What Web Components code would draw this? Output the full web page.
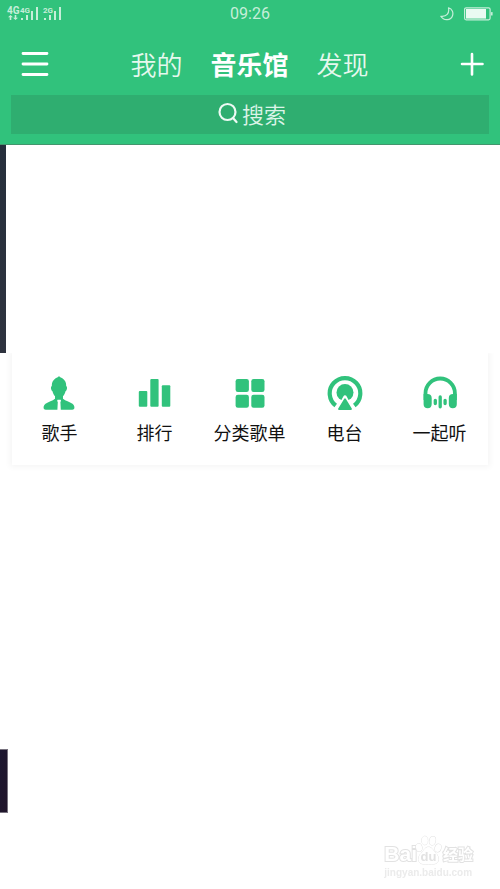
<!DOCTYPE html>
<html lang="zh-CN">
<head>
<meta charset="utf-8">
<meta name="viewport" content="width=device-width, initial-scale=1">
<title>音乐馆</title>
<style>
html, body { margin: 0; background: #fff; }
body { font-family: "Noto Sans CJK SC", "Noto Sans", sans-serif; }
</style>
</head>
<body>
<music-app></music-app>

<template id="status-bar">
<style>
:host { display: grid; grid-template-columns: 1fr auto 1fr; align-items: center; height: 28px; padding: 0 7px; color: #c6eed9; }
svg { display: block; fill: currentColor; }
time { font: 16px/24px Roboto, sans-serif; }
.left, .right { display: flex; align-items: center; gap: 10px; }
.left { gap: 4px; }
.right { justify-content: flex-end; }
.sims { display: flex; gap: 4px; }
.cell { display: flex; }
.sim { display: grid; }
.sim svg, .sim span { grid-area: 1 / 1; }
.sim span { font: bold 8px/8px Roboto, sans-serif; }
.sim svg { justify-self: end; }
.net { font: bold 10px/8px Roboto, sans-serif; }
</style>
<div class="left">
  <div class="cell"><div class="net"><span>4G</span><svg width="13" height="6" viewBox="0 0 13 6"><path d="M3.500 0 1 2.300h1.700V5h1.600V2.300H6zM8.500 5 6 2.700h1.700V0h1.600v2.700H11z"/></svg></div>
  <div class="sim"><span>4G</span><svg width="19" height="14" viewBox="0 0 19 14"><path d="M1 11h2v2H1zM6 8h2v5H6zM11 4h2v9h-2zM16 0h2v13h-2z"/></svg></div></div>
  <div class="sim"><span>2G</span><svg width="19" height="14" viewBox="0 0 19 14"><path d="M1 11h2v2H1zM6 8h2v5H6zM11 4h2v9h-2zM16 0h2v13h-2z"/></svg></div>
</div>
<time>09:26</time>
<div class="right">
  <svg width="14" height="14" viewBox="0 0 14 14"><path d="M8.500.8C12.200 2 13.600 5.500 12.500 8.700 11 13.300 4 14.400.8 9.300 6.500 10 9.600 6.500 8.500.8Z" fill="none" stroke="currentColor" stroke-width="1.200" stroke-linejoin="round"/></svg>
  <svg width="29" height="14" viewBox="0 0 29 14"><rect x=".6" y=".8" width="25.500" height="12" rx="1.500" fill="none" stroke="currentColor" stroke-width="1.200"/><path fill="#eafaf2" d="M2 2h20v9.600H2z"/><rect x="27" y="5" width="1.600" height="3.600" rx=".6"/></svg>
</div>
</template>

<template id="nav-bar">
<style>
:host { display: grid; grid-template-columns: 1fr auto 1fr; align-items: center; height: 72px; padding: 0 14px 0 20px; }
button { all: unset; box-sizing: border-box; cursor: pointer; display: block; }
svg { display: block; fill: none; stroke: #fff; }
.add { justify-self: end; }
nav { display: flex; gap: 28px; padding-right: 7px; }
nav button { font-size: 26px; line-height: 36px; font-weight: 350; color: #e6f8ee; }
nav button[aria-current] { font-weight: 700; color: #fff; }
</style>
<button aria-label="菜单"><svg width="30" height="28" viewBox="0 0 30 28"><path d="M3 3.500h24M3 14h24M3 24.500h24" stroke-width="2.800" stroke-linecap="round"/></svg></button>
<nav><button>我的</button><button aria-current="page">音乐馆</button><button>发现</button></nav>
<button class="add" aria-label="添加"><svg width="28" height="28" viewBox="0 0 28 28"><path d="M4 14h20.500M14 4v20.500" stroke-width="2.600" stroke-linecap="round"/></svg></button>
</template>

<template id="search-bar">
<style>
:host { display: block; margin: -5px 11px 0; }
button { all: unset; cursor: pointer; box-sizing: border-box; width: 100%; height: 39px; display: flex; align-items: center; justify-content: center; gap: 4px; padding: 0 0 4px 4px; background: #2fae70; color: #dcf4e8; font-size: 22px; line-height: 32px; font-weight: 350; }
svg { display: block; }
</style>
<button><svg width="20" height="22" viewBox="0 0 20 22"><g fill="none" stroke="#eefaf4" stroke-width="2.200" stroke-linecap="round"><circle cx="9.500" cy="10" r="8"/><path d="m15 16 3.500 4"/></g></svg><span><slot></slot></span></button>
</template>

<template id="menu-item">
<style>
:host { display: block; flex: 1 1 0; }
a { display: flex; flex-direction: column; align-items: center; gap: 8px; color: #111; text-decoration: none; font-size: 18px; line-height: 26px; white-space: nowrap; }
::slotted(svg) { display: block; width: 36px; height: 36px; fill: #31c27c; }
</style>
<a href="#"><slot name="icon"></slot><span><slot></slot></span></a>
</template>

<template id="baidu-mark">
<style>
:host { position: fixed; right: 27px; bottom: 10px; color: #fff; -webkit-text-stroke: 2px #e2e2e2; paint-order: stroke fill; }
.row { display: flex; align-items: flex-end; height: 32px; }
.bai { font: bold 21px/24px "Liberation Sans", sans-serif; }
.paw { display: grid; place-items: end center; margin-left: -2px; }
.paw svg, .paw span { grid-area: 1 / 1; }
svg { display: block; fill: #fff; stroke: #e2e2e2; }
.paw span { font: bold 13px/18px "Liberation Sans", sans-serif; color: #e2e2e2; -webkit-text-stroke: 0; }
.cn { font-size: 15px; line-height: 24px; font-weight: 700; margin-left: 1px; }
.url { font: bold 10px/13px "Liberation Sans", sans-serif; color: #ebebeb; -webkit-text-stroke: 0; }
</style>
<div class="row"><span class="bai">Bai</span><div class="paw"><svg width="27" height="31" viewBox="0 0 27 31"><path d="M13.500 12c4 0 4.500 4 7.500 6.500 3.500 3 3.800 10-2 10.500-3 .3-8 .3-11 0-5.800-.5-5.500-7.500-2-10.500C9 16 9.500 12 13.500 12Z"/><ellipse cx="4" cy="12.500" rx="3" ry="4" transform="rotate(-15 4 12.500)"/><ellipse cx="9.800" cy="5.500" rx="3" ry="4.300"/><ellipse cx="17.500" cy="5.800" rx="3" ry="4.300" transform="rotate(12 17.500 5.800)"/><ellipse cx="23" cy="13" rx="3" ry="4" transform="rotate(20 23 13)"/></svg><span>du</span></div><span class="cn">经验</span></div>
<div class="url">jingyan.baidu.com</div>
</template>

<template id="music-app">
<style>
:host { display: flex; flex-direction: column; min-height: 100vh; }
header { background: #31c27c; padding-bottom: 10px; border-bottom: 1px solid #43956d; }
.banner { position: relative; z-index: 1; height: 208px; background: linear-gradient(#262f3c, #2e333f) left / 6px 100% no-repeat #fff; }
.card { display: flex; margin: 0 12px; padding: 22px 1px 20px 0; background: #fff; box-shadow: 0 0 6px 2px #f5f5f5; }
.next { width: 7px; height: 62px; margin: auto 0 76px; background: linear-gradient(100deg, #1c1730, #21152a); border: 1px solid #77727e; border-left: 0; }
</style>
<header><status-bar></status-bar><nav-bar></nav-bar><search-bar>搜索</search-bar></header>
<div class="banner"></div>
<div class="card">
  <menu-item>歌手<svg slot="icon" viewBox="0 0 36 36"><path d="M17 1c1 1.500 2.600 1.700 4 2.800 2.200 1.700 3.300 4.200 3.200 7.200.8.500 1 1.800.7 3-.3 1-.8 2-1.400 2.300-.5 2-1.300 3.700-2.500 5v2.500c2.500 2.300 6.500 3 9.500 5 1.500 1 2 2.800 1.900 4.200-.2 1.200-.9 1.700-2.100 1.700H18.800L18.400 27c.6-.5.7-1.500.3-2.200h-3.200c-.4.700-.3 1.700.3 2.200l-.4 7.700H3.700c-1.200 0-1.900-.5-2.100-1.700-.1-1.400.4-3.200 1.900-4.200 3-2 7-2.700 9.500-5v-2.500c-1.200-1.300-2-3-2.500-5-.6-.3-1.100-1.300-1.400-2.300-.3-1.200-.1-2.500.7-3-.1-3 1-5.500 3.200-7.200 1.400-1.100 3-1.300 4-2.800Z"/></svg></menu-item>
  <menu-item>排行<svg slot="icon" viewBox="0 0 36 36"><rect x="1.800" y="16" width="8.500" height="15.800" rx="1"/><rect x="13.300" y="4" width="8.300" height="27.800" rx="1"/><rect x="24.800" y="10.300" width="8.500" height="21.500" rx="1"/></svg></menu-item>
  <menu-item>分类歌单<svg slot="icon" viewBox="0 0 36 36"><rect x="3.600" y="4" width="13.300" height="13" rx="2.300"/><rect x="19.300" y="4" width="13.200" height="13" rx="2.300"/><rect x="3.600" y="19.700" width="13.300" height="13" rx="2.300"/><rect x="19.300" y="19.700" width="13.200" height="13" rx="2.300"/></svg></menu-item>
  <menu-item>电台<svg slot="icon" viewBox="0 0 36 36"><path d="M8.700 30.500A15.300 15.300 0 1 1 27.300 30.500" fill="none" stroke="#31c27c" stroke-width="4.200"/><circle cx="18" cy="17.500" r="8.500"/><path d="M18 22 25.500 35.500H10.500Z" stroke="#fff" stroke-width="3.500" stroke-linejoin="round" fill="#fff"/><path d="M18 24.300 24 34H12Z" stroke="#31c27c" stroke-width="1.800" stroke-linejoin="round"/></svg></menu-item>
  <menu-item>一起听<svg slot="icon" viewBox="0 0 36 36"><path d="M3.500 25V18.200a14.700 14.700 0 0 1 29.400 0V25" fill="none" stroke="#31c27c" stroke-width="3.800"/><path d="M1.600 19H5.500c2.700 0 4.200 1.500 4.200 4V29c0 2.700-1.500 4.300-4 4.300s-4.100-1.500-4.100-4ZM34.800 19H31c-2.700 0-4.200 1.500-4.200 4V29c0 2.700 1.500 4.300 4 4.300s4-1.500 4-4Z"/><path d="M13.300 25.300v3.200M18.200 22v9.800M23.100 25.300v3.200" stroke="#31c27c" stroke-width="3.300" stroke-linecap="round"/></svg></menu-item>
</div>
<div class="next"></div>
<baidu-mark></baidu-mark>
</template>

<script>
class TemplateElement extends HTMLElement {
  constructor() {
    super();
    const template = document.getElementById(this.localName);
    this.attachShadow({ mode: "open" }).append(template.content.cloneNode(true));
  }
}
for (const name of ["status-bar", "nav-bar", "search-bar", "menu-item", "baidu-mark", "music-app"]) {
  customElements.define(name, class extends TemplateElement {});
}
</script>
</body>
</html>
